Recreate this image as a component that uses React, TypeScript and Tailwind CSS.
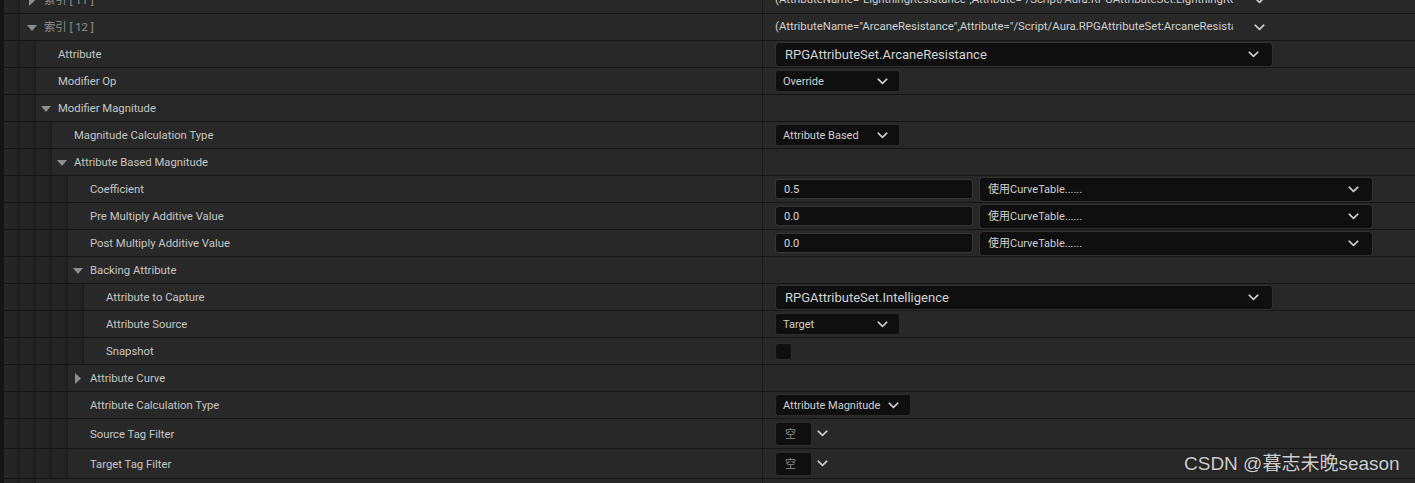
import React from "react";

const Chevron = ({ className = "" }: { className?: string }) => (
  <svg width="11" height="7" viewBox="0 0 11 7" className={className} fill="none">
    <path d="M1.2 1.2 L5.5 5.3 L9.8 1.2" stroke="#cfcfcf" strokeWidth="1.6" strokeLinecap="round" strokeLinejoin="round" />
  </svg>
);

const TriDown = () => (
  <svg width="10" height="6" viewBox="0 0 10 6">
    <path d="M0 0 L10 0 L5 6 Z" fill="#8e8e8e" />
  </svg>
);
const TriRight = () => (
  <svg width="6" height="11" viewBox="0 0 6 11">
    <path d="M0 0 L6 5.5 L0 11 Z" fill="#8e8e8e" />
  </svg>
);

const Combo = ({ text, w, arrowGap }: { text: string; w: string; arrowGap?: string }) => (
  <div className={`flex items-center justify-between h-[22px] ${w} rounded-[3px] bg-[#0f0f0f] border border-[#2c2c2c] pl-[7px] pr-[11px]`}>
    <span className="text-[11px] text-[#d0d0d0] leading-none whitespace-nowrap">{text}</span>
    <Chevron className={arrowGap} />
  </div>
);

const BigCombo = ({ text, w }: { text: string; w: string }) => (
  <div className={`flex items-center justify-between h-[25px] ${w} rounded-[4px] bg-[#0f0f0f] border border-[#313131] pl-[9px] pr-[13px]`}>
    <span className="text-[13px] text-[#d4d4d4] leading-none whitespace-nowrap">{text}</span>
    <Chevron />
  </div>
);

const NumField = ({ v }: { v: string }) => (
  <div className="flex items-center gap-[6px]">
    <div className="flex items-center h-[20px] w-[198px] rounded-[3px] bg-[#0f0f0f] border border-[#363636] pl-[8px]">
      <span className="text-[11px] text-[#d8d8d8] leading-none">{v}</span>
    </div>
    <div className="flex items-center justify-between h-[25px] w-[394px] rounded-[4px] bg-[#0f0f0f] border border-[#313131] pl-[8px] pr-[13px]">
      <span className="text-[11px] text-[#cfcfcf] leading-none whitespace-nowrap" style={{ fontFamily: "Roboto, 'Noto Sans CJK SC', sans-serif" }}>使用CurveTable......</span>
      <Chevron />
    </div>
  </div>
);

const TagField = () => (
  <div className="flex items-center gap-[5px]">
    <div className="flex items-center h-[24px] w-[37px] rounded-[3px] bg-[#0f0f0f] border border-[#2c2c2c] pl-[9px]">
      <span className="text-[11px] text-[#8a8a8a] leading-none" style={{ fontFamily: "'Noto Sans CJK SC', sans-serif" }}>空</span>
    </div>
    <Chevron />
  </div>
);

type RowDef = {
  depth: number;
  label: React.ReactNode;
  arrow?: "down" | "right";
  h?: number;
  value?: React.ReactNode;
};

const Band = () => (
  <div className="w-[16px] shrink-0 self-stretch bg-[linear-gradient(90deg,#252525_0%,#252525_72%,#1b1b1b_100%)]" />
);

const Row = ({ r, extra = "" }: { r: RowDef; extra?: string }) => {
  const bands = [];
  for (let i = 0; i <= r.depth; i++) bands.push(<Band key={i} />);
  return (
    <div className={`flex border-b border-[#161616] ${extra}`} style={{ height: r.h ?? 27 }}>
      <div className="flex w-[762px] shrink-0">
        <div className="w-[4px] shrink-0 bg-[#141414]" />
        {bands}
        <div className={`flex items-center flex-1 bg-[#282828] ${r.depth === 0 ? "pl-[7px]" : "pl-[5px]"}`}>
          <div className="w-[17px] flex items-center mt-[1px]">
            {r.arrow === "down" && <TriDown />}
            {r.arrow === "right" && <div className="pl-[2px] flex"><TriRight /></div>}
          </div>
          <span className="text-[11.3px] text-[#c6c6c6] leading-none whitespace-nowrap mt-[2px]">{r.label}</span>
        </div>
      </div>
      <div className="w-[1px] shrink-0 bg-[#171717]" />
      <div className="flex items-center flex-1 bg-[#282828] pl-[12px] overflow-hidden">{r.value}</div>
    </div>
  );
};

export default function App() {
  const rows: RowDef[] = [
    {
      depth: 0,
      arrow: "down",
      label: <span className="text-[#8f8f8f]" style={{ fontFamily: "Roboto, 'Noto Sans CJK SC', sans-serif" }}>索引 [ 12 ]</span>,
      value: (
        <div className="flex items-center">
          <span className="w-[458px] overflow-hidden whitespace-nowrap text-[11.4px] text-[#cfcfcf] leading-none">
            (AttributeName="ArcaneResistance",Attribute="/Script/Aura.RPGAttributeSet:ArcaneResistance",AttributeOwner=None)
          </span>
          <Chevron className="ml-[21px]" />
        </div>
      ),
    },
    { depth: 1, label: "Attribute", value: <BigCombo text="RPGAttributeSet.ArcaneResistance" w="w-[498px]" /> },
    { depth: 1, label: "Modifier Op", value: <Combo text="Override" w="w-[125px]" /> },
    { depth: 1, label: "Modifier Magnitude", arrow: "down" },
    { depth: 2, label: "Magnitude Calculation Type", value: <Combo text="Attribute Based" w="w-[125px]" /> },
    { depth: 2, label: "Attribute Based Magnitude", arrow: "down" },
    { depth: 3, label: "Coefficient", value: <NumField v="0.5" /> },
    { depth: 3, label: "Pre Multiply Additive Value", value: <NumField v="0.0" /> },
    { depth: 3, label: "Post Multiply Additive Value", value: <NumField v="0.0" /> },
    { depth: 3, label: "Backing Attribute", arrow: "down" },
    { depth: 4, label: "Attribute to Capture", value: <BigCombo text="RPGAttributeSet.Intelligence" w="w-[498px]" /> },
    { depth: 4, label: "Attribute Source", value: <Combo text="Target" w="w-[125px]" /> },
    {
      depth: 4,
      label: "Snapshot",
      value: <div className="w-[17px] h-[17px] rounded-[3px] bg-[#0f0f0f] border border-[#2c2c2c]" />,
    },
    { depth: 3, label: "Attribute Curve", arrow: "right" },
    { depth: 3, label: "Attribute Calculation Type", value: <Combo text="Attribute Magnitude" w="w-[136px]" /> },
    { depth: 3, label: "Source Tag Filter", h: 30, value: <TagField /> },
    { depth: 3, label: "Target Tag Filter", h: 30, value: <TagField /> },
  ];

  return (
    <div className="relative w-[1415px] h-[483px] overflow-hidden bg-[#262626]" style={{ fontFamily: "Roboto, 'Noto Sans CJK SC', sans-serif" }}>
      <Row
        extra="-mt-[13px]"
        r={{
          depth: 0,
          arrow: "right",
          label: <span className="text-[#8f8f8f]">索引 [ 11 ]</span>,
          value: (
            <div className="flex items-center">
              <span className="w-[458px] overflow-hidden whitespace-nowrap text-[11.4px] text-[#cfcfcf] leading-none">
                (AttributeName="LightningResistance",Attribute="/Script/Aura.RPGAttributeSet:LightningResistance")
              </span>
              <Chevron className="ml-[21px]" />
            </div>
          ),
        }}
      />
      {rows.map((r, i) => (
        <Row key={i} r={r} />
      ))}
      <Row r={{ depth: 1, label: "" }} />
      <div
        className="absolute left-[1184px] top-[454px] text-[19px] leading-none text-[#cdcdcd] whitespace-nowrap"
        style={{ fontFamily: "'Liberation Sans', 'Noto Sans CJK SC', sans-serif", textShadow: "0 0 2px rgba(0,0,0,0.5)" }}
      >
        CSDN @暮志未晚season
      </div>
    </div>
  );
}
